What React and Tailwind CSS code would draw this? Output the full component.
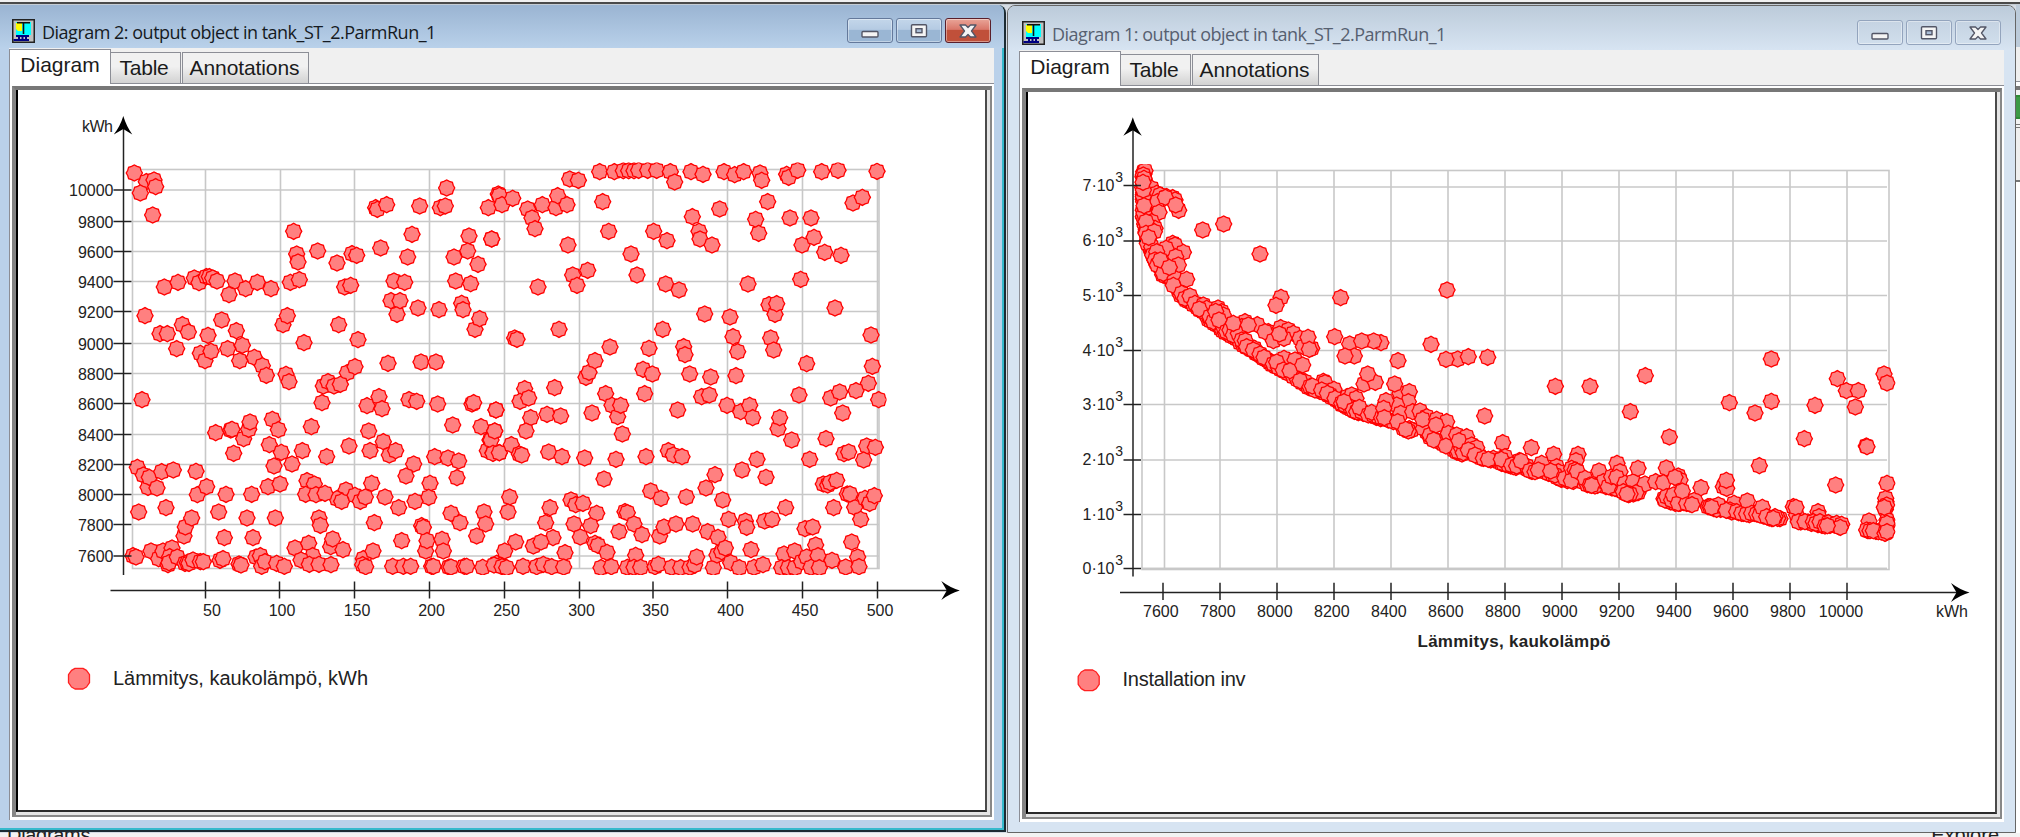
import React from "react"

// Sample positions are kept per tile, in thirds of a pixel from the tile origin
const runTiles = [
  {
    x: 70,
    y: 100,
    points:
      "193,219 229,245 211,279 252,240 257,260 248,345 671,394 680,462 684,486 743,453 801,489 846,461 860,466 932,444 917,323 922,328 950,314 1026,403 1049,318 1013,471 1130,264 1111,323 1126,318 1197,408 1193,453 1152,471 1224,493 1265,417 1285,282 1255,323 1157,543 1202,551 1175,610 1179,629 1215,688 1229,656 1107,629 1044,624 972,543 1004,547 963,602 981,643 990,602 824,561 842,556 661,547 688,539 283,561 324,547 373,534 387,548 409,530 418,530 428,534 441,543 495,543 477,584 527,566 562,547 603,566 225,647 270,701 292,701 337,674 355,696 414,706 455,660 499,692 639,674 652,647 806,674 864,719 702,728",
  },
  {
    x: 70,
    y: 340,
    points:
      "320,26 391,40 405,62 423,34 473,26 509,62 517,16 553,52 577,77 589,106 648,103 657,125 954,70 1053,66 1098,66 832,98 855,80 760,138 774,125 792,138 811,133 756,188 216,179 437,278 482,270 486,268 491,340 521,296 536,268 540,246 607,238 625,269 598,314 634,337 612,378 666,372 697,332 724,260 770,350 837,318 891,197 927,170 936,206 896,273 900,332 940,305 958,345 977,332 1017,179 1040,184 1103,192 1206,192 1211,188 1148,255 1233,260 1278,210 1260,300 1274,273 1252,332 1269,338 1288,338 1094,350 1134,354 1166,363 1161,413 1031,372 1008,408 1080,430 1076,472 1035,484 986,503 945,471 905,430 913,548 995,602 828,450 801,476 815,484 855,466 871,484 886,471 711,422 733,432 707,463 738,464 765,460 747,534 751,556 782,620 788,597 819,629 675,624 716,610 728,647 693,660 718,673 747,673 783,674 880,656 878,674 887,680 909,633 968,679 1000,679 1022,679 1055,557 1060,562 1067,633 1071,602 1116,598 1120,633 1085,679 1090,679 1137,681 1143,681 1183,679 1190,679 1238,682 1143,520 1170,548 1242,516 1247,552 1220,588 1280,670 1290,676 202,382 220,405 234,442 238,412 261,444 275,395 310,390 378,394 382,464 410,440 468,463 545,463 594,440 630,432 206,516 288,503 446,516 531,534 616,534 342,588 346,561 365,534 463,593 549,593 189,647 198,651 243,633 266,656 279,633 306,624 294,674 299,650 297,668 322,651 345,670 352,668 357,670 369,660 391,665 400,665 450,661 459,656 507,672 513,675 558,651 571,647 575,679 585,665 620,670 643,679",
  },
  {
    x: 490,
    y: 100,
    points:
      "5,417 28,286 36,314 68,295 113,327 126,354 135,386 157,314 198,323 203,287 231,314 239,237 265,241 329,215 373,215 400,212 416,212 432,212 446,211 473,211 500,211 541,215 554,246 603,215 639,223 702,215 734,224 761,215 810,219 815,241 890,223 896,232 923,211 995,215 1044,211 1161,214 338,305 356,394 234,435 248,525 293,511 261,556 144,561 423,462 441,525 491,394 531,422 607,350 627,394 630,417 666,435 689,327 797,358 806,400 833,305 900,354 963,354 936,435 972,412 1004,457 1053,466 1089,309 1117,292 932,538 774,552 527,552 567,570 644,642 720,651 729,710 743,755 518,688 581,740 477,745 360,741 207,688 74,714 81,718 837,614 855,643 860,611 842,714 851,750 1035,624 1143,705",
  },
  {
    x: 490,
    y: 340,
    points:
      "585,44 288,112 297,97 315,62 459,88 487,102 599,102 662,111 738,107 950,71 1147,79 1135,130 1098,152 1022,174 1049,156 1166,179 1058,219 104,146 194,143 90,184 116,174 18,210 122,233 171,223 212,228 108,273 347,161 464,161 306,219 366,196 383,230 392,196 397,282 563,210 635,170 658,165 711,196 752,215 779,196 788,233 927,165 864,266 869,233 905,300 1008,296 3,300 14,273 9,340 28,338 64,314 88,342 95,345 176,336 216,350 284,354 378,358 468,350 535,332 550,345 576,350 801,358 756,390 828,412 342,417 675,404 648,444 482,453 513,475 589,471 698,480 959,358 1062,341 1076,336 1130,318 1121,360 1156,322 1000,432 1013,435 1020,428 1040,421 1072,462 1094,502 1080,462 1031,503 1125,475 1139,490 1153,467 1112,538 887,503 59,471 54,516 180,503 167,548 243,480 257,494 279,490 320,520 252,552 302,557 189,593 271,591 315,610 324,616 351,637 77,606 44,633 130,618 153,606 225,638 405,515 412,518 432,552 387,575 456,584 509,588 522,561 558,552 608,552 653,575 684,592 716,538 766,543 770,562 824,543 846,538 783,629 945,566 968,561 1085,606 977,615 882,642 914,633 1103,651 437,646 12,675 36,680 50,683 99,679 140,680 160,673 185,680 221,681 333,683 364,680 412,682 432,682 452,682 495,680 505,673 545,682 572,683 600,682 614,675 620,651 670,683 681,645 695,635 706,624 722,668 748,683 792,682 819,674 875,683 895,683 915,683 935,665 950,651 984,647 963,682 988,683 1026,661 1067,681 1107,680",
  },
]

const costTiles = [
  // Tightly packed samples on the lower front
  {
    x: 1060,
    y: 100,
    points:
      "252,222 249,230 253,240 251,256 248,262 251,278 250,284 250,298 251,305 252,324 250,331 252,346 251,354 255,358 254,372 256,379 259,389 258,396 262,402 264,418 262,422 267,428 270,434 271,446 274,452 277,458 281,470 285,472 288,487 294,490 300,500 308,512 308,524 316,528 328,530 338,545 345,556 355,570 362,586 372,590 378,600 386,604 395,606 400,614 412,622 420,630 438,640 445,658 452,662 462,670 470,674 482,686 488,692 496,698 508,702 514,708 524,712 530,716 540,728 550,736 560,742 575,750 588,760",
  },
  {
    x: 1060,
    y: 350,
    points:
      "555,-14 565,-8 572,-2 588,6 594,12 606,20 618,28 630,38 636,44 648,50 662,58 674,64 684,70 700,80 712,88 726,98 738,104 745,112 758,114 772,120 780,124 795,130 806,136 815,142 830,150 838,156 846,164 860,170 866,174 874,178 884,184 895,188 910,190 918,190 932,194 946,200 950,202 962,206 985,210 1000,215 1036,238 1048,236 1055,240 1100,245 1110,262 1134,274 1150,282 1174,292 1182,300 1190,306 1200,308 1206,312 1216,302 1230,305 1240,310 1258,318 1264,324 1292,330 1310,330 1318,336 1325,340 1338,344 1352,348 1368,352",
  },
  {
    x: 1480,
    y: 340,
    points:
      "88,372 104,376 130,382 144,388 156,394 172,392 196,396 206,400 218,404 232,412 244,418 262,422 280,424 296,416 310,426 322,434 352,436 366,432 378,440 396,444 412,440 424,452 436,460 446,464 460,462 474,458 552,476 566,482 572,486 586,490 600,490 612,488 630,492 684,500 702,506 722,508 732,506 755,516 776,518 790,520 808,524 824,520 850,528 868,534 876,536 900,536 962,546 984,546 994,550 1014,554 1026,556 1050,556 1062,554 1076,560 1164,572 1188,574 1204,576 1212,572 1218,578 1218,485 1216,508 1222,556",
  },
  {
    x: 1060,
    y: 100,
    points:
      "251,215 255,212 250,225 275,265 290,280 252,235 250,290 250,270 249,247 300,285 320,290 338,293 345,300 292,305 316,292 297,337 356,331 347,315 250,350 252,340 252,317 275,365 285,385 262,385 258,365 258,400 283,395 262,430 275,440 266,412 428,390 491,372 600,462 338,430 345,435 318,445 370,457 278,465 290,455 347,470 285,480 292,495 355,495 310,520 301,480 345,535 328,502 340,556 380,538 365,580 375,595 390,588 405,610 430,615 430,635 440,625 418,627 474,624 485,635 490,645 450,650 460,665 467,634 490,680 477,660 500,695 510,690 520,705 555,665 545,680 535,700 520,670 592,674 565,675 545,720 570,740 556,722 600,765 583,745 610,775 625,695 615,695 640,722 662,683 685,690 700,700 720,715 672,715 658,702 730,740 755,745 744,712 748,748 663,592 648,616 842,593 1161,570 824,710 869,732 963,728 941,723 905,723 1113,733",
  },
  {
    x: 1060,
    y: 350,
    points:
      "883,18 855,18 1014,32 1193,27 1158,28 1225,20 1283,22 560,-10 580,0 600,12 625,32 612,22 640,42 672,25 655,52 650,36 705,30 670,60 690,62 728,45 735,95 720,92 750,110 765,120 790,94 795,98 757,108 822,118 785,120 810,135 802,130 825,145 845,160 862,140 875,135 888,145 855,165 870,170 852,155 880,180 890,185 905,185 898,172 925,195 940,195 955,200 935,187 912,102 946,97 923,72 1020,130 1048,125 1004,102 1045,155 1010,165 978,152 965,203 971,175 1022,190 1058,185 973,203 1080,183 1030,235 1013,215 1045,243 1037,238 1100,200 1090,235 1088,208 1130,208 1160,215 1110,255 1128,225 1121,270 1165,250 1158,288 1190,255 1220,260 1195,305 1205,295 1210,308 1197,272 1235,285 1250,293 1225,300 1245,315 1274,198 1270,325 1300,325 1285,328 1328,278 1335,320 1330,340 1345,345 1360,350 1324,328 1378,332",
  },
  {
    x: 1480,
    y: 340,
    points:
      "95,375 120,372 110,378 140,378 123,363 154,323 150,392 165,395 185,370 175,390 221,343 230,380 235,395 240,415 225,405 212,393 255,415 294,343 288,362 275,385 285,390 300,410 274,422 292,394 315,415 345,438 330,435 357,393 370,425 405,445 385,440 335,436 395,410 411,370 420,395 410,412 435,430 460,425 474,385 495,432 468,458 430,455 450,462 441,462 527,425 559,384 550,428 595,408 600,420 585,412 555,480 560,470 575,480 580,465 595,490 620,490 607,453 645,480 636,494 663,443 730,440 740,445 739,421 710,508 690,500 715,495 695,502 762,490 750,510 739,511 770,515 785,520 800,522 802,483 815,520 830,522 840,525 847,502 860,530 893,535 885,530 880,535 940,500 950,525 948,502 955,545 975,545 1014,515 1017,530 1000,545 1008,550 1020,545 1045,548 1070,550 1085,553 1035,558 1081,562 1042,557 1167,543 1160,570 1170,572 1195,575 1180,572 1221,540 1217,475 1220,495 1213,502 1221,430 1221,550 1215,580 1221,575 1067,435 1159,318 1161,320 973,296 838,377 825,219 874,184 748,188 874,57 568,291 451,215 496,107 330,139 226,139 1072,116 1099,152 1135,152 1126,201 1005,196 1212,102 1221,129",
  },
]

const runYTicks = [
  ["10000", 190],
  ["9800", 221.5],
  ["9600", 251.5],
  ["9400", 281.5],
  ["9200", 311.5],
  ["9000", 343.5],
  ["8800", 373.5],
  ["8600", 403.5],
  ["8400", 434.5],
  ["8200", 464.5],
  ["8000", 494.5],
  ["7800", 524.5],
  ["7600", 556],
]

const runXTicks = [
  ["50", 205.5, 212],
  ["100", 279.5, 282],
  ["150", 354.5, 357],
  ["200", 429.5, 431.5],
  ["250", 504.5, 506.5],
  ["300", 579.5, 581.5],
  ["350", 653, 655.5],
  ["400", 727.5, 730.5],
  ["450", 802.5, 805],
  ["500", 877.5, 880],
]

const costYTicks = [
  ["7", 185.5],
  ["6", 241],
  ["5", 295.5],
  ["4", 350.5],
  ["3", 404.5],
  ["2", 460],
  ["1", 514.5],
  ["0", 568.5],
]

const costXTicks = [
  "7600",
  "7800",
  "8000",
  "8200",
  "8400",
  "8600",
  "8800",
  "9000",
  "9200",
  "9400",
  "9600",
  "9800",
  "10000",
].map((label, i) => [label, 1163 + i * 57])

// Eight-pointed marker outline
const markerPath =
  Array.from({ length: 16 }, (_, i) => {
    const r = i % 2 === 0 ? 8.1 : 7.1
    const a = (i * Math.PI) / 8
    return `${i === 0 ? "M" : "L"}${(r * Math.cos(a)).toFixed(2)} ${(
      r * Math.sin(a)
    ).toFixed(2)}`
  }).join(" ") + "Z"

const Markers = ({ tiles }) => (
  <g fill="#ff8080" stroke="#ff0000" strokeWidth="1.3">
    {tiles.map((tile, tileIndex) =>
      tile.points.split(" ").map((point, index) => {
        const [px, py] = point.split(",").map(Number)
        return (
          <path
            key={`${tileIndex}-${index}`}
            d={markerPath}
            transform={`translate(${tile.x + px / 3} ${tile.y + py / 3})`}
          />
        )
      })
    )}
  </g>
)

const UpArrow = ({ x, y }) => (
  <path d={`M${x} ${y}q3 10 9 18.500l-9 -5.500l-9.500 5.500q6.500 -8.500 9.500 -18.500z`} fill="#000" />
)

const RightArrow = ({ x, y }) => (
  <path d={`M${x} ${y}q-10 3 -18.500 9.500l5.500 -9.500l-5.500 -9.500q8.500 6.500 18.500 9.500z`} fill="#000" />
)

const LegendDot = ({ x, y }) => (
  <path
    d={`M${x - 4} ${y - 10.3}h8l3.500 2l3 4.300v8l-3 4.300l-3.500 2h-8l-3.500 -2l-3 -4.300v-8l3 -4.300z`}
    fill="#ff8080"
    stroke="#ff2020"
    strokeWidth="1.3"
    strokeLinejoin="round"
  />
)

const RunChart = () => (
  <svg
    width="967"
    height="720"
    viewBox="18 90 967 720"
    className="block font-['Liberation_Sans',Arial,sans-serif] text-[16px]"
  >
    <clipPath id="run-clip">
      <rect x="124" y="162.5" width="762.5" height="412.5" />
    </clipPath>
    <g stroke="#c8c8c8" strokeWidth="1.6" fill="none">
      <rect x="132.5" y="169.5" width="746.5" height="399" />
      {runYTicks.map(([label, y]) => (
        <path key={label} d={`M132.5 ${y}H879`} />
      ))}
      {runXTicks.map(([label, x]) => (
        <path key={label} d={`M${label === "100" ? 280.5 : x} 169.5V568`} />
      ))}
    </g>
    <g clipPath="url(#run-clip)">
      <Markers tiles={runTiles} />
    </g>
    <g stroke="#222" strokeWidth="1.5">
      <path d="M123.5 122V575M110.5 590.5H955" />
      {runYTicks.map(([label, y]) => (
        <path key={label} d={`M113.5 ${y}H131.5`} />
      ))}
      {runXTicks.map(([label, x]) => (
        <path key={label} d={`M${x} 581.5V598.5`} />
      ))}
    </g>
    <UpArrow x={123.3} y={116} />
    <RightArrow x={959.8} y={590.5} />
    <g fill="#222">
      <text x="82" y="132" textLength="31">
        kWh
      </text>
      {runYTicks.map(([label, y]) => (
        <text key={label} x="113.5" y={y + 6} textAnchor="end">
          {label}
        </text>
      ))}
      {runXTicks.map(([label, , x]) => (
        <text key={label} x={x} y="616" textAnchor="middle">
          {label}
        </text>
      ))}
      <text x="113" y="685" textLength="255" className="text-[20px]">
        Lämmitys, kaukolämpö, kWh
      </text>
    </g>
    <LegendDot x={79} y={678.7} />
  </svg>
)

const CostChart = () => (
  <svg
    width="967"
    height="720"
    viewBox="1028 92 967 720"
    className="block font-['Liberation_Sans',Arial,sans-serif] text-[16px]"
  >
    <clipPath id="cost-clip">
      <rect x="1134" y="164.3" width="761.5" height="412" />
    </clipPath>
    <g stroke="#c8c8c8" strokeWidth="1.6" fill="none">
      <rect x="1142" y="170.5" width="747" height="399" />
      <path d="M1142 568.7H1887" strokeWidth="2" />
      {costYTicks.map(([label, y]) => (
        <path key={label} d={`M1142 ${label === "7" ? 187 : y}H1887`} />
      ))}
      {costXTicks.map(([label, x]) => (
        <path key={label} d={`M${label === "7600" ? 1164.5 : x} 170.5V568`} />
      ))}
    </g>
    <g clipPath="url(#cost-clip)">
      <Markers tiles={costTiles} />
    </g>
    <g stroke="#222" strokeWidth="1.5">
      <path d="M1133 124V576.5M1120 592.4H1965" />
      {costYTicks.map(([label, y]) => (
        <path key={label} d={`M1123.5 ${y}H1141`} />
      ))}
      {costXTicks.map(([label, x]) => (
        <path key={label} d={`M${x} 582.7V600`} />
      ))}
    </g>
    <UpArrow x={1132.8} y={117.3} />
    <RightArrow x={1969.5} y={592.4} />
    <g fill="#222">
      {costYTicks.map(([label, y]) => (
        <React.Fragment key={label}>
          <text x="1082.5" y={y + 5} textLength="32">
            {label}·10
          </text>
          <text x="1115.3" y={y - 3.7} className="text-[14px]">
            3
          </text>
        </React.Fragment>
      ))}
      {costXTicks.map(([label, x]) => (
        <text
          key={label}
          x={label === "10000" ? x - 6 : x - 2.2}
          y="617"
          textAnchor="middle"
        >
          {label}
        </text>
      ))}
      <text x="1936" y="617" textLength="32">
        kWh
      </text>
      <text x="1417.5" y="647" textLength="193" className="text-[17px] font-bold">
        Lämmitys, kaukolämpö
      </text>
      <text x="1122.5" y="686" className="text-[20px]" textLength="123">
        Installation inv
      </text>
    </g>
    <LegendDot x={1088.7} y={680.3} />
  </svg>
)

const AppIcon = () => (
  <svg width="23" height="24" viewBox="0 0 23 24" className="shrink-0">
    <rect x="0.75" y="0.75" width="21.5" height="22.5" fill="#c0c0c0" stroke="#222" strokeWidth="1.5" />
    <rect x="4" y="3" width="15" height="13" fill="#00ffff" />
    <path d="M4 4h6v8h-4l-2-2z" fill="#ffff00" />
    <path d="M5 3.8H18M11.5 4V15" stroke="#111" strokeWidth="1.6" />
    <path d="M4 17H17M1.5 21H17M7 17V22M10.5 17V22M14 17V22" stroke="#000080" strokeWidth="2" />
  </svg>
)

const CaptionGlyph = ({ type }) => (
  <svg width="20" height="16" viewBox="0 0 20 16">
    {type === "min" && (
      <rect x="2" y="8.500" width="16" height="5.500" rx="1" fill="#f4f4f4" stroke="#535666" strokeWidth="1.4" />
    )}
    {type === "max" && (
      <>
        <rect x="2.5" y="1.7" width="15" height="12" rx="1" fill="#f4f4f4" stroke="#535666" strokeWidth="1.4" />
        <rect x="7" y="5.7" width="6" height="4" fill="#a9bdd6" stroke="#535666" strokeWidth="1.4" />
      </>
    )}
    {type === "close" && (
      <path
        d="M2 2h5.500L10 4.500l2.500-2.500h5.500l-4.500 6l4.500 6h-5.500L10 11.500l-2.500 2.500h-5.500L6.500 8z"
        fill="#f4f4f4"
        stroke="#535666"
        strokeWidth="1.3"
        strokeLinejoin="round"
      />
    )}
  </svg>
)

const CaptionButtons = ({ active }) => (
  <div className="flex gap-[3px]">
    {["min", "max", "close"].map((type) => {
      let look =
        "border-[#93a4bd] bg-linear-to-b from-[#c5d3e2] to-[#d0deec]"
      if (active) {
        look =
          type === "close"
            ? "border-[#5a1f2b] bg-linear-to-b from-[#e9a598] from-0% via-[#d9776a] via-45% to-[#c0503a] to-50%"
            : "border-[#64799b] bg-linear-to-b from-[#c3d6ea] from-0% via-[#b5cbe3] via-45% to-[#9ab6d4] to-50%"
      }
      return (
        <button
          key={type}
          className={`flex h-[25px] w-[46px] items-center justify-center rounded-[3px] border inset-ring inset-ring-white/40 ${look}`}
        >
          <CaptionGlyph type={type} />
        </button>
      )
    })}
  </div>
)

const DiagramWindow = ({ title, active, children }) => {
  const frame = active
    ? "h-[827px] w-[1006px] rounded-tr-lg border-r-2 border-b-2 border-[#1c2b33] pl-[9px] bg-[#bad1ea] shadow-[inset_-2px_-2px_0_#36b9cc]"
    : "ml-px h-[828px] w-[1009px] rounded-t-lg border border-[#666] pl-[11px] bg-[#d7e4f2]"
  const titleBar = active
    ? "h-[43px] -ml-[9px] pl-[12px] bg-linear-to-b from-[#9ab4d2] to-[#b9d1ea] pt-[13px] pr-[13px] text-[#151a22]"
    : "h-[44px] -ml-[11px] pl-[14px] bg-linear-to-b from-[#bccbda] to-[#d7e4f2] pt-[14px] pr-[14px] text-[#566070]"

  return (
    <section className={`shrink-0 overflow-hidden ${frame}`}>
      <header className={`flex items-start justify-between ${titleBar}`}>
        <div className="flex items-center gap-[7px]">
          <AppIcon />
          <h1 className="pt-[2px] text-[18px] leading-[24px] tracking-[-0.5px] whitespace-nowrap font-['Open_Sans','Noto_Sans',sans-serif]">
            {title}
          </h1>
        </div>
        <CaptionButtons active={active} />
      </header>
      <div className="flex h-[772px] w-[985px] flex-col bg-[#f0f0f0] text-[21px] text-[#1b1b1b] font-['Liberation_Sans',Arial,sans-serif]">
        <nav className="flex h-[35px] items-end">
          <button className="relative -mb-px h-[35px] w-[102px] border border-b-0 border-[#8c8e96] bg-white pb-[4px] leading-[24px]">
            <span>Diagram</span>
          </button>
          <button className="h-[31px] w-[70px] border border-l-0 border-b-0 border-[#8c8e96] bg-linear-to-b from-[#f1f1f1] from-45% to-[#d2d2d2] pr-[3px] leading-[30px] tracking-[-0.2px]">
            Table
          </button>
          <button className="ml-px h-[31px] w-[127px] border border-b-0 border-[#8c8e96] bg-linear-to-b from-[#f1f1f1] from-45% to-[#d2d2d2] pr-[2px] leading-[30px] tracking-[-0.1px]">
            Annotations
          </button>
        </nav>
        <div className="flex-1 border-t border-l border-[#8c8e96] bg-white pt-[2px] pr-[2px] pb-[3px] pl-[2px]">
          <div className="h-full border-t-4 border-r-2 border-b-2 border-l-4 border-t-[#777] border-r-[#888] border-b-[#888] border-l-[#858585] bg-[#e4e4e4] pr-[3px] pb-[3px]">
            <div className="border-r-2 border-b-2 border-l-2 border-r-[#4a4a4a] border-b-[#2a2a2a] border-l-black bg-white">
              {children}
            </div>
          </div>
        </div>
      </div>
    </section>
  )
}

const App = () => {
  return (
    <div className="h-[837px] w-[2020px] overflow-hidden bg-[#f3f3f3]">
      <div className="h-[5px] border-t-2 border-b border-t-[#f0f0f0] border-b-[#c4ccd4] bg-[#4a4a4a]" />
      <div className="flex h-[828px] items-start bg-[#d4dbe3]">
        <DiagramWindow
          title="Diagram 2: output object in tank_ST_2.ParmRun_1"
          active
        >
          <RunChart />
        </DiagramWindow>
        <DiagramWindow title="Diagram 1: output object in tank_ST_2.ParmRun_1">
          <CostChart />
        </DiagramWindow>
        {/* Sliver of the window behind */}
        <div className="flex h-full flex-1 flex-col bg-[#f3f3f3]">
          <div className="h-[42px] bg-[#bccbda]" />
          <div className="h-[35px] border-b border-[#8c8e96] bg-[#efefef]" />
          <div className="h-[8px] border-b-4 border-[#777] bg-white" />
          <div className="my-[5px] h-[24px] border-y-2 border-dotted border-[#2e8b35] bg-[#3d9a45]" />
          <div className="h-[4px] border-y border-[#777]" />
          <div className="h-[54px] border-b-2 border-[#777] bg-[#efefef]" />
          <div className="flex-1 bg-white" />
        </div>
      </div>
      <div className="-mt-px flex h-[5px] justify-between overflow-hidden pr-[21px] pl-[7px] text-[20px] leading-[6px] text-[#222] font-['Liberation_Sans',Arial,sans-serif]">
        <span className="tracking-[-0.3px]">Diagrams</span>
        <span>Explore</span>
      </div>
    </div>
  )
}

export default App
